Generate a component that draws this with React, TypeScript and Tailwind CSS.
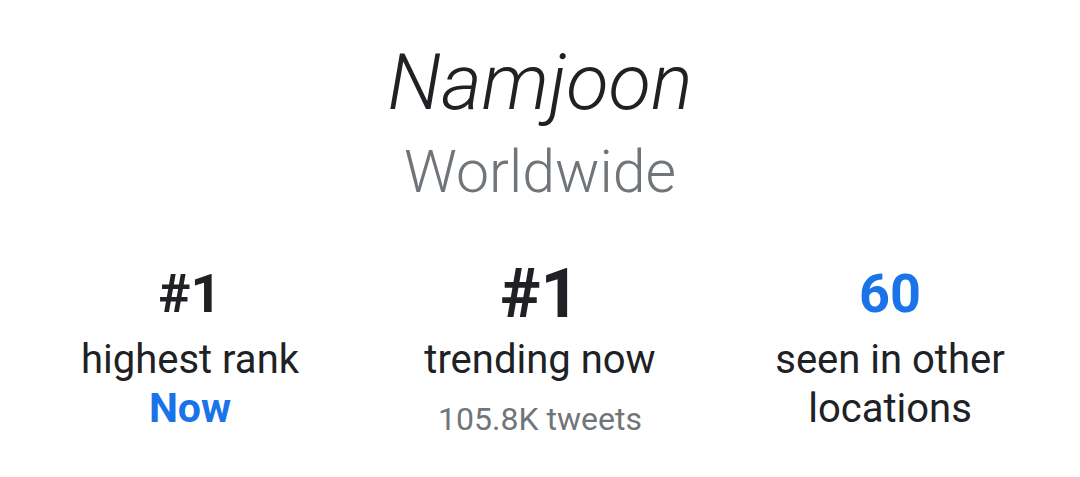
import React from "react";

type Stat = {
  value: string;
  valueClass: string;
  label: React.ReactNode;
  extra?: React.ReactNode;
};

const stats: Stat[] = [
  {
    value: "#1",
    valueClass: "text-[54px] text-[#202124]",
    label: "highest rank",
    extra: <div className="text-[41px] font-bold text-[#1a73e8] leading-[48px]">Now</div>,
  },
  {
    value: "#1",
    valueClass: "text-[68px] text-[#202124]",
    label: "trending now",
    extra: (
      <div className="mt-[11px] text-[32px] text-[#70757a] leading-[48px]">105.8K tweets</div>
    ),
  },
  {
    value: "60",
    valueClass: "text-[54px] text-[#1a73e8]",
    label: (
      <>
        seen in other
        <br />
        locations
      </>
    ),
  },
];

export default function App() {
  return (
    <div
      className="w-[1080px] h-[477px] bg-white flex flex-col items-center"
      style={{ fontFamily: "Roboto, 'Noto Sans', sans-serif" }}
    >
      {/* Title */}
      <div className="pt-[36px] flex flex-col items-center">
        <h1 className="text-[78px] font-light italic text-[#202124] leading-[94px]">Namjoon</h1>
        <div className="mt-[8px] text-[59px] font-light text-[#70757a] leading-[68px]">
          Worldwide
        </div>
      </div>

      {/* Stats */}
      <div className="w-full px-[15px] mt-[52px] grid grid-cols-3">
        {stats.map((s, i) => (
          <div key={i} className="flex flex-col items-center text-center">
            <div className={`font-bold leading-[72px] h-[72px] ${s.valueClass}`}>{s.value}</div>
            <div className="mt-[5px] text-[40px] text-[#202124] leading-[49px]">{s.label}</div>
            {s.extra}
          </div>
        ))}
      </div>
    </div>
  );
}
